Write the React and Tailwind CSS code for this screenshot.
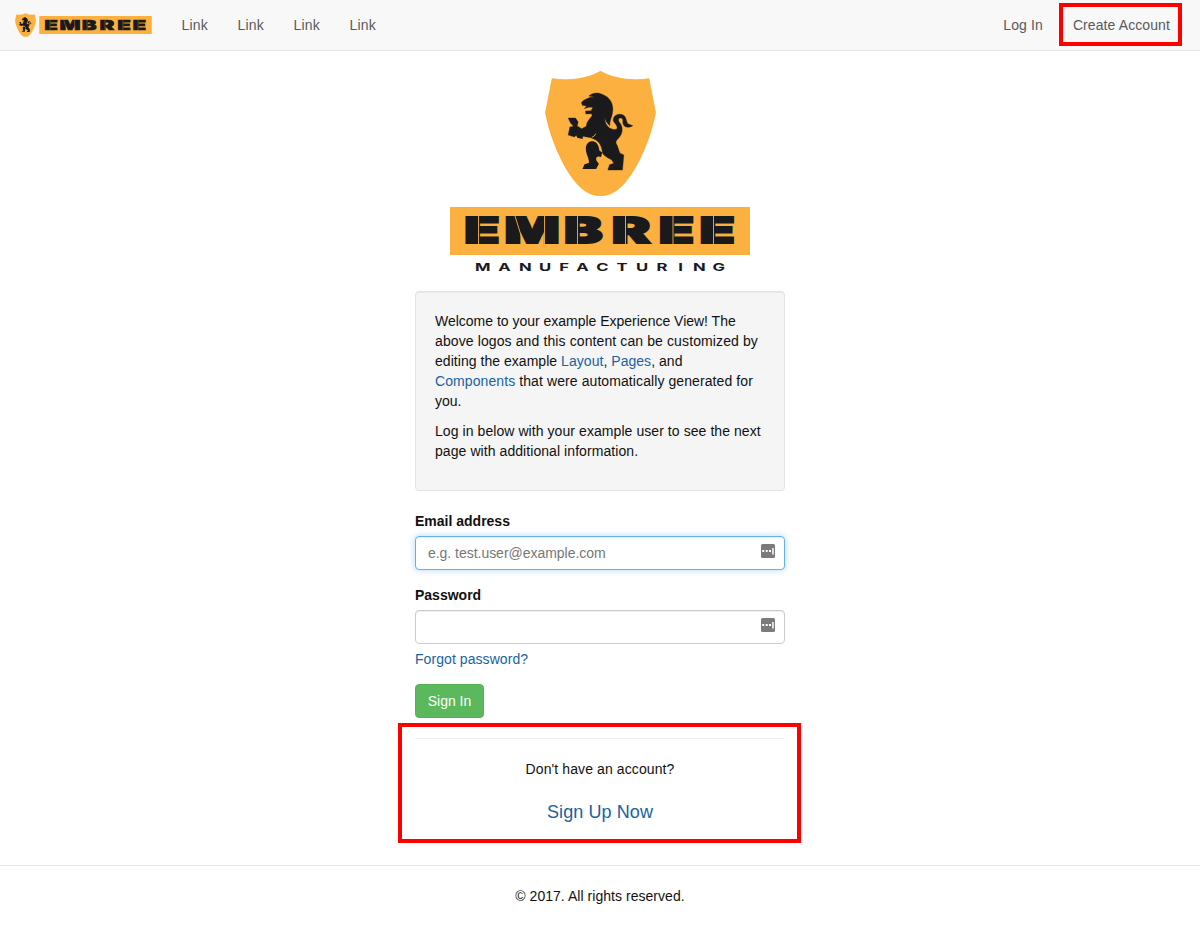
const LION_BODY =
  "M63 51 L71 44 L82 39 L90 36 L104 36 L85 32 C96 22 112 20 128 28 C148 36 158 54 157 74 C156 94 147 105 148 121 C139 114 134 106 133 96 C132 108 136 120 146 127 C154 132 164 134 169 131 C173 122 162 114 158 106 C158 92 168 85 182 87 C201 90 195 112 204 116 L217 121 C204 129 190 127 187 114 C187 104 188 99 181 98 C172 98 172 105 179 114 C190 129 186 150 169 164 C165 170 166 175 170 180 L178 203 L190 209 L186 254 L142 254 L147 238 L160 234 L153 223 C140 217 130 211 126 203 C124 183 116 167 101 162 L91 157 L67 153 L66 160 L51 157 L47 150 L42 155 L23 149 L28 125 L39 123 L30 113 L23 98 L45 98 L53 110 L50 122 L64 130 L78 122 C77 111 86 102 95 91 L93 85 L76 86 L75 77 L92 76 L97 66 L84 66 L72 70 L78 62 L65 60 Z";
const LION_LEG =
  "M76 190 C76 174 87 166 99 168 C113 172 115 186 117 196 L125 201 L122 215 C110 210 104 217 108 226 L115 235 L107 251 L66 251 L72 237 L85 233 C88 222 76 208 76 190 Z";

function Shield({ className }) {
  return (
    <svg viewBox="29 17 332 375" className={className} aria-hidden="true">
      <path
        d="M195 18 C155 41 100 48 50 40 L30 142 C45 220 80 300 120 350 C145 380 170 391 195 391 C220 391 245 380 270 350 C310 300 345 220 360 142 L340 40 C290 48 235 41 195 18Z"
        fill="#fbb040"
        stroke="#f9a51a"
        strokeWidth="2"
      />
      <g transform="translate(75 60)">
        <path d={LION_BODY} fill="#1a191c" stroke="#1a191c" strokeWidth="1" />
        <path d={LION_LEG} fill="#1a191c" />
        <path
          d="M94 156 Q103 153 106 145"
          fill="none"
          stroke="#fbb040"
          strokeWidth="2.5"
        />
      </g>
    </svg>
  );
}

function Wordmark({ className }) {
  return (
    <svg viewBox="450 207 300 48" className={className}>
      <rect x="450" y="207" width="300" height="48" fill="#fbb040" />
      <g transform="translate(450 0) scale(1.65 1)">
        <text
          x="8.6 33 69.1 98 126.500 151.2"
          y="243.1"
          fontFamily="Inter, sans-serif"
          fontWeight="900"
          fontSize="35"
          fill="#1a191c"
          stroke="#1a191c"
          strokeWidth="1.9"
          strokeLinejoin="miter"
        >
          EMBREE
        </text>
      </g>
      <path
        d="M478.500 216V245 M577.500 216V245 M625.500 216V245 M673 216V245 M713.500 216V245 M515 216L524 245 M544.500 216V245"
        stroke="#fbb040"
        strokeWidth="0.9"
      />
    </svg>
  );
}

function Tagline() {
  return (
    <svg viewBox="470 255 260 20" className="block h-5 w-[260px]">
      <g transform="translate(470 0) scale(1.6 1)">
        <text
          x="3.2 17.6 30.7 43.2 55.8 66.4 78.9 91.5 103.7 116.6 130.2 139.4 151.6"
          y="271"
          fontFamily="Inter, sans-serif"
          fontWeight="700"
          fontSize="10.4"
          fill="#1a191c"
        >
          MANUFACTURING
        </text>
      </g>
    </svg>
  );
}

function FieldIcon() {
  return (
    <svg viewBox="0 0 14 14" className="h-3.5 w-3.5 shrink-0 -translate-y-0.5" aria-hidden="true">
      <rect width="14" height="14" rx="1.5" fill="#7b7b7b" />
      <path d="M1.200 6h2v2h-2z M4.700 6h2v2h-2z M8 6h2v2h-2z M11.200 4h1.500v6.500h-1.500z" fill="#fff" />
    </svg>
  );
}

const link = "text-[#1863a0]";

export default function App() {
  return (
    <div
      className="relative flex h-[928px] w-[1200px] flex-col overflow-hidden bg-white text-sm leading-5 text-[#111]"
      style={{ fontFamily: '"Liberation Sans", Arial, sans-serif' }}
    >
      <nav className="flex h-[51px] shrink-0 items-center border-b border-[#e7e7e7] bg-[#f8f8f8] pr-[30px] pl-[15px] text-[#5a5a5a]">
        <a href="#" className="flex items-center gap-[3px]">
          <Shield className="h-6 w-[21px]" />
          <Wordmark className="h-[18px] w-[113px]" />
        </a>
        <div className="ml-[29.5px] flex gap-[29.5px] tracking-[0.2px]">
          <a href="#">Link</a>
          <a href="#">Link</a>
          <a href="#">Link</a>
          <a href="#">Link</a>
        </div>
        <div className="ml-auto flex gap-[30px] tracking-[0.1px]">
          <a href="#">Log In</a>
          <a href="#">Create Account</a>
        </div>
      </nav>

      <main className="mx-auto flex w-[370px] flex-col">
        <div className="flex flex-col items-center pt-5">
          <Shield className="h-[125px] w-[111px]" />
          <Wordmark className="mt-[11px] h-12 w-[300px]" />
          <Tagline />
        </div>

        <section className="mt-4 h-[200px] rounded border border-[#e3e3e3] bg-[#f5f5f5] p-[19px] whitespace-nowrap shadow-[inset_0_1px_1px_rgba(0,0,0,0.05)]">
          <p>
            <span className="tracking-[-0.01px]">Welcome to your example Experience View! The</span>
            <br />
            <span className="tracking-[0.11px]">above logos and this content can be customized by</span>
            <br />
            <span className="tracking-[0.04px]">
              editing the example <a href="#" className={link}>Layout</a>,{" "}
              <a href="#" className={link}>Pages</a>, and
            </span>
            <br />
            <span className="tracking-[0.09px]">
              <a href="#" className={link}>Components</a> that were automatically generated for
            </span>
            <br />
            you.
          </p>
          <p className="mt-2.5 tracking-[0.07px]">
            Log in below with your example user to see the next
            <br />
            page with additional information.
          </p>
        </section>

        <form className="mt-5 flex flex-col items-start">
          <label htmlFor="email" className="font-bold">
            Email address
          </label>
          <div className="mt-[5px] flex h-[34px] w-full items-center rounded border border-[#66afe9] bg-white pr-[9px] pl-3 shadow-[inset_0_1px_1px_rgba(0,0,0,0.075),0_0_6px_rgba(102,175,233,0.5)]">
            <input
              id="email"
              placeholder="e.g. test.user@example.com"
              className="min-w-0 flex-1 bg-transparent tracking-[-0.03px] outline-none placeholder:text-[#777]"
            />
            <FieldIcon />
          </div>
          <label htmlFor="password" className="mt-[15px] font-bold">
            Password
          </label>
          <div className="mt-[5px] flex h-[34px] w-full items-center rounded border border-[#ccc] bg-white pr-[9px] pl-3 shadow-[inset_0_1px_1px_rgba(0,0,0,0.075)]">
            <input id="password" type="password" className="min-w-0 flex-1 bg-transparent outline-none" />
            <FieldIcon />
          </div>
          <a href="#" className={`mt-[5px] tracking-[0.07px] ${link}`}>
            Forgot password?
          </a>
          <button
            type="button"
            className="mt-[15px] h-[34px] w-[69px] rounded border border-[#56b156] bg-[#5cb85c] text-white"
          >
            Sign In
          </button>
        </form>

        <section className="mt-5 flex flex-col items-center border-t border-[#eee] pt-5 tracking-[0.1px]">
          <p>Don't have an account?</p>
          <a href="#" className={`mt-[21px] text-lg leading-6 ${link}`}>
            Sign Up Now
          </a>
        </section>
      </main>

      <footer className="mt-auto flex h-[63px] shrink-0 justify-center border-t border-[#e7e7e7] pt-5 tracking-[0.04px]">
        © 2017. All rights reserved.
      </footer>

      <div className="pointer-events-none absolute top-[3px] left-[1059px] h-[43px] w-[123px] border-4 border-[#f00]" />
      <div className="pointer-events-none absolute top-[723px] left-[398px] h-[120px] w-[403px] border-4 border-[#f00]" />
    </div>
  );
}
